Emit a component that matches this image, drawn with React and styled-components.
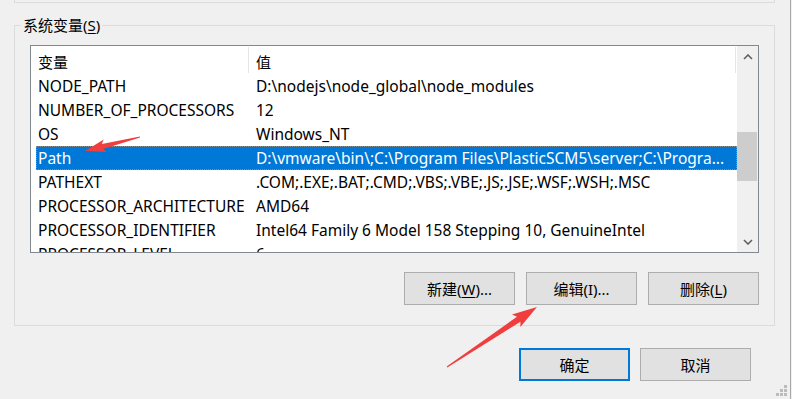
import React from "react";
import styled, { createGlobalStyle } from "styled-components";

const GlobalStyle = createGlobalStyle`
  html, body {
    margin: 0;
    padding: 0;
    background: #f0f0f0;
  }
  body {
    font-family: "Noto Sans", "Noto Sans CJK SC", sans-serif;
    font-size: 15px;
    color: #000;
  }
`;

const Window = styled.div`
  position: relative;
  width: 791px;
  height: 399px;
  box-sizing: border-box;
  border-right: 1px solid #a8a8a8;
  background: #f0f0f0;
  overflow: hidden;
  display: flex;
  flex-direction: column;
`;

const PrevGroupEdge = styled.div`
  margin-left: 14px;
  width: 761px;
  height: 3px;
  box-sizing: border-box;
  border: 1px solid #dcdcdc;
  border-top: none;
`;

const Group = styled.fieldset`
  margin: 12px 0 0 14px;
  width: 761px;
  box-sizing: border-box;
  padding: 0;
  border: 1px solid #dcdcdc;
  min-width: 0;
`;

const Legend = styled.legend`
  margin-left: 6px;
  padding: 0 2px;
  line-height: 20px;
  font-size: 15px;
`;

const GroupBody = styled.div`
  padding: 10px 15px 20px 15px;
  display: flex;
  flex-direction: column;
`;

const ListBox = styled.div`
  height: 208px;
  box-sizing: border-box;
  border: 1px solid #828790;
  background: #fff;
  display: flex;
  font-size: 15.5px;
`;

const TableArea = styled.div`
  flex: 1;
  overflow: hidden;
  display: flex;
  flex-direction: column;
`;

const Header = styled.div`
  height: 28px;
  flex-shrink: 0;
  display: flex;
  align-items: stretch;
`;

const HeadCell = styled.div`
  width: ${(p) => p.$width}px;
  box-sizing: border-box;
  padding: 2px 0 0 7px;
  display: flex;
  align-items: center;
  position: relative;
  font-size: 15px;
  &::after {
    content: "";
    position: absolute;
    right: 0;
    top: 1px;
    bottom: 1px;
    width: 1px;
    background: #e5e5e5;
  }
`;

const Row = styled.div`
  height: 24px;
  flex-shrink: 0;
  margin-left: 5px;
  display: flex;
  align-items: center;
  white-space: nowrap;
  box-sizing: border-box;
  background: ${(p) => (p.$selected ? "#0078d7" : "transparent")};
  color: ${(p) => (p.$selected ? "#fff" : "#000")};
  outline: ${(p) => (p.$selected ? "1px dotted rgba(245, 164, 90, 0.55)" : "none")};
  outline-offset: -1px;
`;

const NameCell = styled.div`
  width: 212px;
  flex-shrink: 0;
  padding-left: 2px;
  box-sizing: border-box;
`;

const ValueCell = styled.div`
  flex: 1;
  padding-left: 8px;
  overflow: hidden;
`;

const ScrollBar = styled.div`
  width: 21px;
  flex-shrink: 0;
  background: #f0f0f0;
  display: flex;
  flex-direction: column;
`;

const ScrollButton = styled.div`
  height: 21px;
  display: flex;
  align-items: center;
  justify-content: center;
  flex-shrink: 0;
`;

const Track = styled.div`
  flex: 1;
`;

const Thumb = styled.div`
  margin: 65px 1px 0 0;
  height: 49px;
  background: #cdcdcd;
`;

const ButtonRow = styled.div`
  display: flex;
  justify-content: flex-end;
  gap: ${(p) => p.$gap}px;
  margin-top: ${(p) => p.$top}px;
  margin-right: ${(p) => p.$right || 0}px;
`;

const Button = styled.div`
  width: 111px;
  height: 33px;
  box-sizing: border-box;
  background: #e1e1e1;
  border: ${(p) => (p.$default ? "2px solid #0078d7" : "1px solid #adadad")};
  display: flex;
  align-items: center;
  justify-content: center;
  font-size: 15px;
`;

const Key = styled.span`
  text-decoration: underline;
  text-underline-offset: 2px;
`;

const Grip = styled.div`
  position: absolute;
  right: 3px;
  bottom: 3px;
  display: grid;
  grid-template-columns: repeat(3, 3px);
  grid-template-rows: repeat(3, 3px);
  gap: 1px;
`;

const Dot = styled.span`
  width: 3px;
  height: 3px;
  background: ${(p) => (p.$on ? "#bcbcbc" : "transparent")};
`;

const Overlay = styled.svg`
  position: absolute;
  left: 0;
  top: 0;
  pointer-events: none;
`;

const rows = [
  ["NODE_PATH", "D:\\nodejs\\node_global\\node_modules"],
  ["NUMBER_OF_PROCESSORS", "12"],
  ["OS", "Windows_NT"],
  ["Path", "D:\\vmware\\bin\\;C:\\Program Files\\PlasticSCM5\\server;C:\\Progra..."],
  ["PATHEXT", ".COM;.EXE;.BAT;.CMD;.VBS;.VBE;.JS;.JSE;.WSF;.WSH;.MSC"],
  ["PROCESSOR_ARCHITECTURE", "AMD64"],
  ["PROCESSOR_IDENTIFIER", "Intel64 Family 6 Model 158 Stepping 10, GenuineIntel"],
  ["PROCESSOR_LEVEL", "6"],
];

function arrowPoints(tail, tip, headLen, headW, shaftW) {
  const dx = tip[0] - tail[0];
  const dy = tip[1] - tail[1];
  const len = Math.hypot(dx, dy);
  const ux = dx / len;
  const uy = dy / len;
  const nx = -uy;
  const ny = ux;
  const bx = tip[0] - ux * headLen;
  const by = tip[1] - uy * headLen;
  const pts = [
    [tail[0] + nx * 0.6, tail[1] + ny * 0.6],
    [bx + nx * shaftW / 2, by + ny * shaftW / 2],
    [bx - ux * 3 + nx * headW / 2, by - uy * 3 + ny * headW / 2],
    tip,
    [bx - ux * 3 - nx * headW / 2, by - uy * 3 - ny * headW / 2],
    [bx - nx * shaftW / 2, by - ny * shaftW / 2],
    [tail[0] - nx * 0.6, tail[1] - ny * 0.6],
  ];
  return pts.map((p) => p[0].toFixed(1) + "," + p[1].toFixed(1)).join(" ");
}

function Chevron({ up }) {
  return (
    <svg width="10" height="6" viewBox="0 0 10 6">
      <path
        d={up ? "M1 5 L5 1 L9 5" : "M1 1 L5 5 L9 1"}
        fill="none"
        stroke="#606060"
        strokeWidth="1.6"
      />
    </svg>
  );
}

export default function App() {
  const grip = [0, 0, 1, 0, 1, 1, 1, 1, 1];
  return (
    <Window>
      <GlobalStyle />
      <PrevGroupEdge />
      <Group>
        <Legend>
          系统变量(<Key>S</Key>)
        </Legend>
        <GroupBody>
          <ListBox>
            <TableArea>
              <Header>
                <HeadCell $width={218}>变量</HeadCell>
                <HeadCell $width={487}>值</HeadCell>
              </Header>
              {rows.map(([name, value]) => (
                <Row key={name} $selected={name === "Path"}>
                  <NameCell>{name}</NameCell>
                  <ValueCell>{value}</ValueCell>
                </Row>
              ))}
            </TableArea>
            <ScrollBar>
              <ScrollButton>
                <Chevron up />
              </ScrollButton>
              <Track>
                <Thumb />
              </Track>
              <ScrollButton>
                <Chevron />
              </ScrollButton>
            </ScrollBar>
          </ListBox>
          <ButtonRow $gap={11} $top={19}>
            <Button>
              新建(<Key>W</Key>)...
            </Button>
            <Button>编辑(I)...</Button>
            <Button>
              删除(<Key>L</Key>)
            </Button>
          </ButtonRow>
        </GroupBody>
      </Group>
      <ButtonRow $gap={10} $top={22} $right={39}>
        <Button $default>确定</Button>
        <Button>取消</Button>
      </ButtonRow>
      <Grip>
        {grip.map((on, i) => (
          <Dot key={i} $on={on} />
        ))}
      </Grip>
      <Overlay width="791" height="399">
        <polygon points={arrowPoints([140, 137], [85, 151], 18, 13, 5)} fill="#f03d3d" />
        <polygon points={arrowPoints([447, 367], [537, 307], 22, 15, 6)} fill="#f03d3d" />
      </Overlay>
    </Window>
  );
}
